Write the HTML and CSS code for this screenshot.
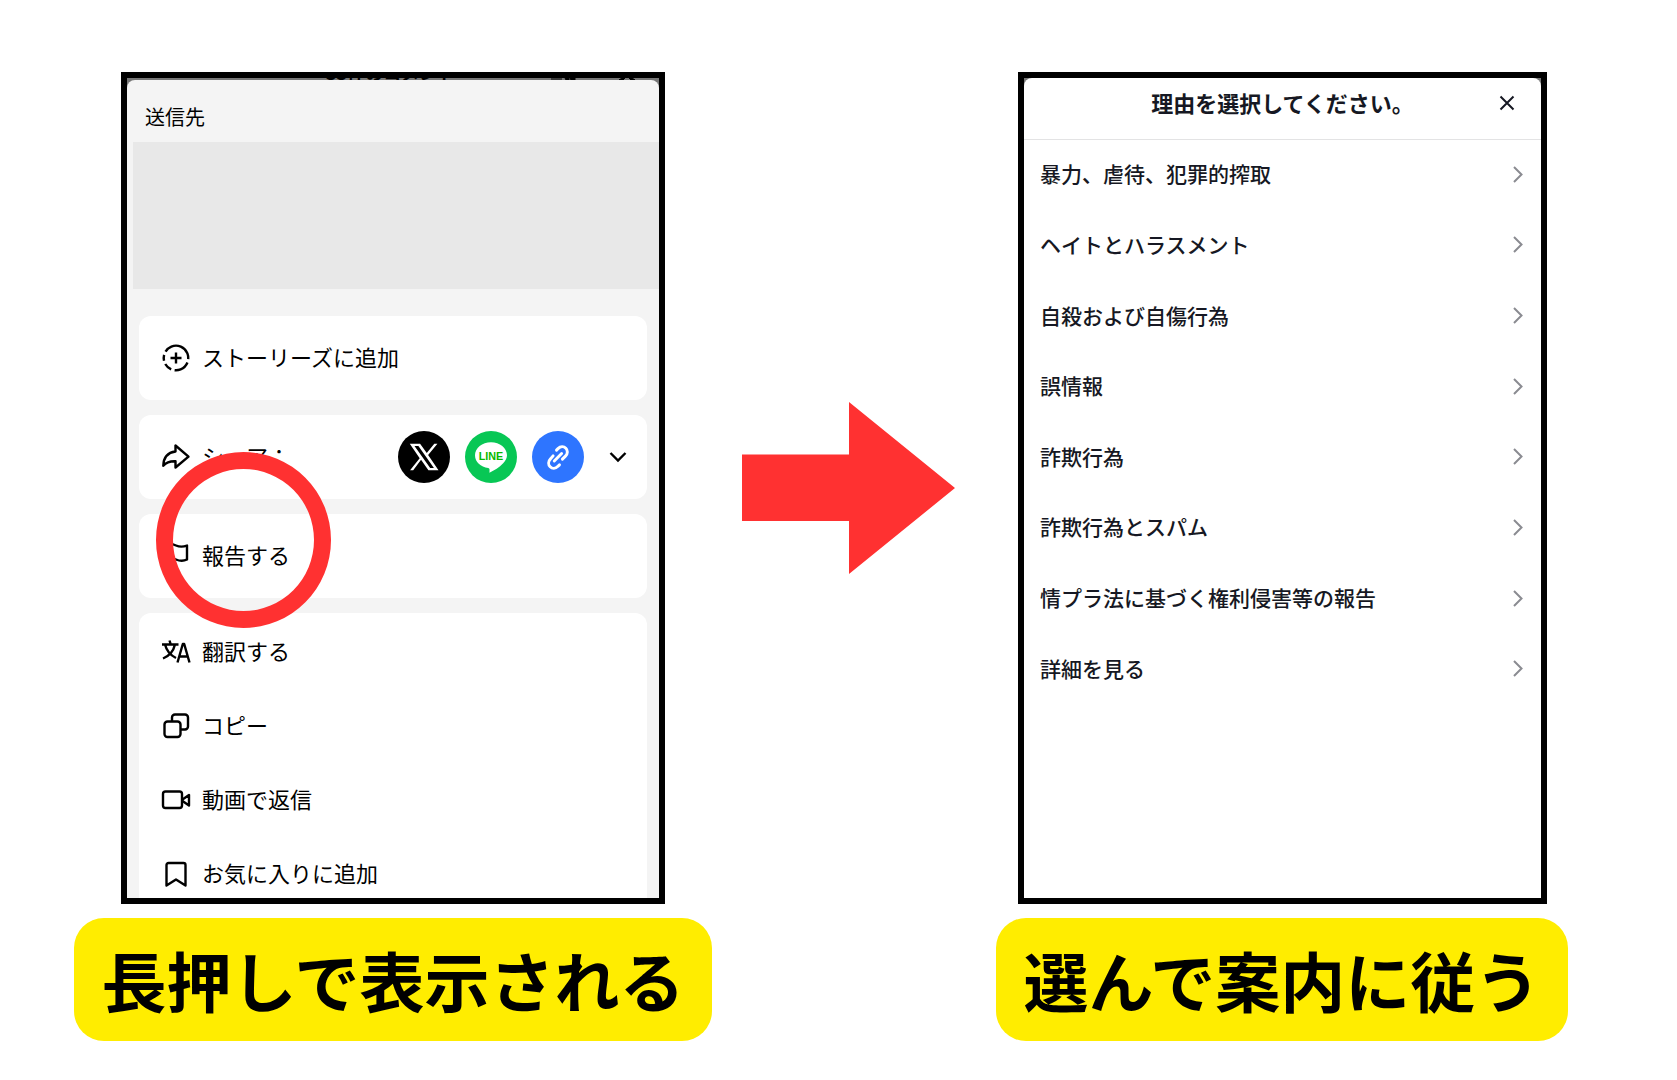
FILE: index.html
```html
<!DOCTYPE html>
<html lang="ja">
<head>
<meta charset="utf-8">
<meta name="viewport" content="width=device-width, initial-scale=1">
<title>コメントの報告手順</title>
<link rel="stylesheet" href="styles.css">
</head>
<body>
<main class="steps">
  <section class="phone phone-share" aria-label="共有メニュー">
    <div class="backdrop">
      <span class="backdrop-title">33件のコメント</span>
      <svg class="backdrop-icons" viewBox="0 0 86 2"><path d="M0 1h11M14 0h4v2h-3zM19 0h5v2h-4zM68 2l3-2h3l-2 2zM78 0h3l3 2h-4z"/></svg>
    </div>
    <div class="sheet">
      <h2 class="sheet-title">送信先</h2>
      <div class="recipients"></div>
      <div class="cards">
        <button class="card row" type="button">
          <svg class="icon" viewBox="0 0 28 28"><circle cx="14" cy="14" r="12.3" stroke-dasharray="25 3.5 16 3.5 8 3.5 6 3.5 8.3 0" transform="rotate(-112 14 14)"/><path d="M14 8.500v11M8.500 14h11"/></svg>
          <span class="label">ストーリーズに追加</span>
        </button>
        <div class="card row">
          <svg class="icon" viewBox="0 0 28 28"><path d="M13.500 2.500v6C6 9.500 1.500 14.500 1.300 22.800c3-3.600 7-4.800 12.200-4.600v6.300L26.500 13.700z"/></svg>
          <span class="label">シェア：</span>
          <div class="targets">
            <button class="target target-x" type="button" aria-label="X"><svg viewBox="0 0 53 53"><path fill="#fff" fill-rule="evenodd" d="M12 13h10.500l6.800 9.500L37 13h3.200L30.700 24.400 41.300 40H31l-7.500-10.600L15.500 40h-3.200l9.800-12.100zM16.800 15.200l16 22.500h3.800l-15.800-22.500z"/></svg></button>
            <button class="target target-line" type="button" aria-label="LINE"><svg viewBox="0 0 53 53"><path fill="#fff" d="M26.500 11.500c-9 0-16.300 6-16.300 13.300 0 6.700 5.800 12 13.500 13 1.600.3 1.400 1.400 1.200 4.700 5-2.500 10-5.500 14-9.700 2.600-2.500 3.900-5 3.900-8 0-7.300-7.300-13.300-16.300-13.300z"/><text x="26.500" y="29.500" text-anchor="middle">LINE</text></svg></button>
            <button class="target target-link" type="button" aria-label="リンクをコピー"><svg viewBox="0 0 53 53"><path class="chain" d="M25 19.500l1.500-1.500c2.600-2.600 6-2.400 8 -.4s2.200 5.400-.4 8L31 28.700M28 34.500l-1.500 1.500c-2.600 2.600-6 2.400-8 .4s-2.200-5.400.4-8L21.500 25.300M22.700 30.500l7.500-7.500"/></svg></button>
          </div>
          <button class="expand" type="button" aria-label="もっと見る"><svg viewBox="0 0 18 12"><path d="M1.500 2l7.500 7.500L16.500 2"/></svg></button>
        </div>
        <button class="card row" type="button">
          <svg class="icon" viewBox="0 0 28 28"><path d="M3.500 26V3.500c4-2.500 7-1.500 10.500 0s6.500 1.800 11 0V17.500c-4 2-7.500 1.500-11 0s-6.500-2-10.500 0"/></svg>
          <span class="label">報告する</span>
        </button>
        <div class="card group">
          <button class="row" type="button">
            <svg class="icon" viewBox="0 0 28 28"><path d="M0 6.500h16.500M7.500 2.500l1.300 4M3 6.500c1.500 6 6 11 11 13.500M13 6.500C11.500 13 7 18 1 20.500M15.500 24.500L20.800 6h1.400L27.500 24.500M17.300 18.500h8.400"/></svg>
            <span class="label">翻訳する</span>
          </button>
          <button class="row" type="button">
            <svg class="icon" viewBox="0 0 28 28"><rect x="2.500" y="9.500" width="16" height="15.500" rx="3"/><path d="M10 9.500V5.500a3 3 0 0 1 3-3h10a3 3 0 0 1 3 3v9a3 3 0 0 1-3 3h-4.500"/></svg>
            <span class="label">コピー</span>
          </button>
          <button class="row" type="button">
            <svg class="icon" viewBox="0 0 28 28"><rect x="1" y="5.500" width="19" height="16.500" rx="2.500"/><path d="M20.500 13.500l6.500-4.500v10.500l-6.500-4.500z"/></svg>
            <span class="label">動画で返信</span>
          </button>
          <button class="row" type="button">
            <svg class="icon" viewBox="0 0 28 28"><path d="M6.500 3h15a2 2 0 0 1 2 2v20.500L14 19.500 4.500 25.500V5a2 2 0 0 1 2-2z"/></svg>
            <span class="label">お気に入りに追加</span>
          </button>
        </div>
      </div>
    </div>
    <div class="highlight"></div>
  </section>

  <svg class="arrow" viewBox="0 0 213 172" role="img" aria-label="次へ"><path d="M0 52.500h107V0l106 86-106 86v-53H0z"/></svg>

  <section class="phone phone-reasons" aria-label="報告の理由">
    <div class="dialog">
      <header class="dialog-head">
        <h2 class="dialog-title">理由を選択してください。</h2>
        <button class="close" type="button" aria-label="閉じる"><svg viewBox="0 0 16 16"><path d="M1.500 1.500l13 13M14.500 1.500l-13 13"/></svg></button>
      </header>
      <ul class="reasons">
        <li><a class="reason" href="#"><span class="label">暴力、虐待、犯罪的搾取</span><svg viewBox="0 0 10 17"><path d="M1 1l7.500 7.500L1 16"/></svg></a></li>
        <li><a class="reason" href="#"><span class="label">ヘイトとハラスメント</span><svg viewBox="0 0 10 17"><path d="M1 1l7.500 7.500L1 16"/></svg></a></li>
        <li><a class="reason" href="#"><span class="label">自殺および自傷行為</span><svg viewBox="0 0 10 17"><path d="M1 1l7.500 7.500L1 16"/></svg></a></li>
        <li><a class="reason" href="#"><span class="label">誤情報</span><svg viewBox="0 0 10 17"><path d="M1 1l7.500 7.500L1 16"/></svg></a></li>
        <li><a class="reason" href="#"><span class="label">詐欺行為</span><svg viewBox="0 0 10 17"><path d="M1 1l7.500 7.500L1 16"/></svg></a></li>
        <li><a class="reason" href="#"><span class="label">詐欺行為とスパム</span><svg viewBox="0 0 10 17"><path d="M1 1l7.500 7.500L1 16"/></svg></a></li>
        <li><a class="reason" href="#"><span class="label">情プラ法に基づく権利侵害等の報告</span><svg viewBox="0 0 10 17"><path d="M1 1l7.500 7.500L1 16"/></svg></a></li>
        <li><a class="reason" href="#"><span class="label">詳細を見る</span><svg viewBox="0 0 10 17"><path d="M1 1l7.500 7.500L1 16"/></svg></a></li>
      </ul>
    </div>
  </section>

  <p class="caption">長押しで表示される</p>
  <p class="caption caption-last">選んで案内に従う</p>
</main>
</body>
</html>
```
FILE: styles.css
```css
* {
  box-sizing: border-box;
}

body {
  margin: 0;
  background: #fff;
  color: #000;
  font-family: "Noto Sans CJK JP", "Noto Sans", sans-serif;
}

button {
  margin: 0;
  padding: 0;
  border: 0;
  background: none;
  color: inherit;
  font: inherit;
  text-align: left;
}

h2,
p,
ul {
  margin: 0;
  padding: 0;
}

svg {
  display: block;
  fill: none;
}

.steps {
  display: grid;
  grid-template-columns: 638fr 284fr 572fr;
  row-gap: 14px;
  padding: 72px 109px 39px 74px;
}

/* Framed screens */
.phone {
  position: relative;
  border: 6px solid #000;
  background: #777;
}

.phone-share {
  margin: 0 47px;
}

.phone-reasons {
  margin: 0 21px 0 22px;
}

.backdrop {
  display: flex;
  align-items: flex-end;
  justify-content: space-between;
  height: 2px;
  padding: 0 22px 0 199px;
  overflow: hidden;
  font-size: 18px;
  font-weight: 700;
  line-height: 16px;
}

.backdrop-icons {
  width: 86px;
  height: 2px;
  fill: #000;
  stroke: #000;
  stroke-width: 1;
}

.sheet {
  border-radius: 8px 8px 0 0;
  background: #f4f4f4;
}

.sheet-title {
  padding: 27px 18px 15px;
  font-size: 20px;
  font-weight: 400;
  line-height: 20px;
}

.recipients {
  height: 147px;
  margin-left: 6px;
  background: #e8e8e8;
}

.cards {
  display: flex;
  flex-direction: column;
  gap: 15px;
  padding: 27px 12px 0;
}

.card {
  border-radius: 12px;
  background: #fff;
}

.row {
  display: flex;
  align-items: center;
  gap: 12px;
  width: 100%;
  padding: 0 20px 0 23px;
  font-size: 22px;
  line-height: 34px;
}

.label {
  padding-bottom: 4px;
}

.card.row {
  min-height: 84px;
}

.group {
  display: flex;
  flex-direction: column;
  gap: 36px;
  padding: 20px 0 5px;
  border-radius: 12px 12px 0 0;
}

.icon {
  flex: none;
  width: 28px;
  height: 28px;
  overflow: visible;
  stroke: #000;
  stroke-width: 2.4;
  stroke-linejoin: round;
}

.targets {
  display: flex;
  gap: 15px;
  margin-left: auto;
}

.target {
  width: 52px;
  height: 52px;
  border-radius: 50%;
}

.target-x {
  background: #000;
}

.target-line {
  background: #08c755;
}

.target-line text {
  fill: #08b900;
  font: 700 11px "Liberation Sans", sans-serif;
}

.target-link {
  background: #2e75ff;
}

.chain {
  stroke: #fff;
  stroke-width: 3;
  stroke-linecap: round;
}

.expand {
  width: 18px;
  margin-left: 13px;
}

.expand path {
  stroke: #000;
  stroke-width: 2.4;
}

.highlight {
  position: absolute;
  top: 374px;
  left: 29px;
  width: 175px;
  height: 176px;
  border: 17px solid #ff3131;
  border-radius: 50%;
}

.arrow {
  align-self: center;
  width: 75%;
  margin-left: 30px;
  fill: #ff3131;
}

/* Reason picker */
.dialog {
  height: 100%;
  border-radius: 8px 8px 0 0;
  background: #fff;
  color: #161823;
}

.dialog-head {
  display: grid;
  grid-template-columns: 16px 1fr 16px;
  align-items: center;
  padding: 7px 26px 19px;
  border-bottom: 1px solid #e3e3e4;
}

.dialog-title {
  grid-column: 2;
  padding-bottom: 1px;
  font-size: 22px;
  font-weight: 700;
  line-height: 34px;
  text-align: center;
}

.close path {
  stroke: #161823;
  stroke-width: 2;
}

.reasons {
  display: grid;
  grid-auto-rows: 1fr;
  height: 565px;
  list-style: none;
}

.reason {
  display: flex;
  align-items: center;
  justify-content: space-between;
  height: 100%;
  padding: 0 18px 2px 16px;
  color: inherit;
  font-size: 21px;
  font-weight: 500;
  line-height: 34px;
  text-decoration: none;
}

.reason .label {
  padding-bottom: 2px;
}

.reason svg {
  width: 10px;
  height: 17px;
  stroke: #8a8b91;
  stroke-width: 2;
}

/* Captions */
.caption {
  grid-column: 1;
  padding: 14px 0;
  border-radius: 30px;
  background: #ffed00;
  font-size: 65px;
  font-weight: 700;
  line-height: 95px;
  text-align: center;
  white-space: nowrap;
}

.caption-last {
  grid-column: 3;
}
```
